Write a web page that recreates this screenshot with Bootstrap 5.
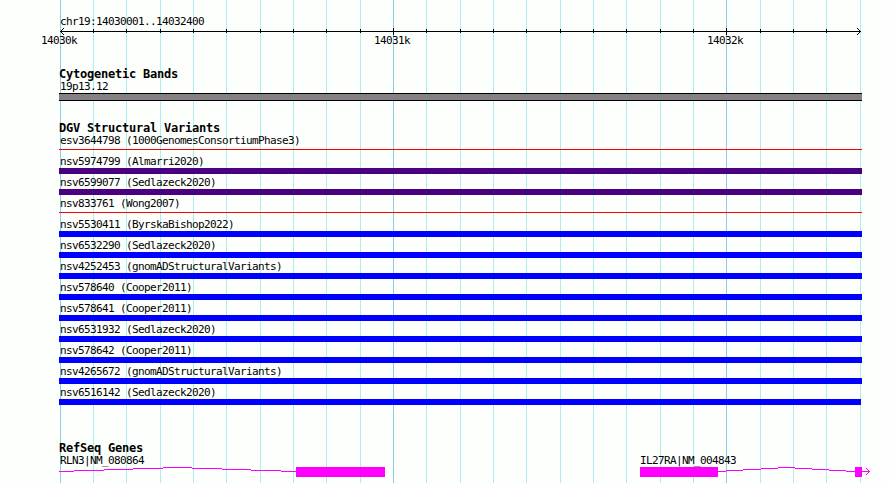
<!DOCTYPE html>
<html lang="en">
<head>
    <meta charset="UTF-8">
    <title>chr19:14030001..14032400</title>
    <link rel="stylesheet" href="https://cdn.jsdelivr.net/npm/bootstrap@5.3.2/dist/css/bootstrap.min.css">
    <style>
        body { background: #fdfffc; color: #000; }
        .browser { width: 890px; height: 483px; }
        .gridlines { z-index: -1; }
        .label {
            font: 11px/12px "DejaVu Sans Mono", monospace;
            letter-spacing: -0.622px;
            white-space: pre;
            height: 12px;
        }
        .track-title {
            font: bold 12px/12px "DejaVu Sans Mono", monospace;
            letter-spacing: -0.224px;
            white-space: pre;
            height: 12px;
        }
        .tracks { padding-left: 59px; }
        .ruler { padding-top: 15px; height: 68px; }
        .ruler svg, .genes svg { display: block; margin-left: -59px; }
        .scale span { flex: 0 0 333px; }
        .scale { margin-left: -18px; }
        .cyto { height: 54px; }
        .band { width: 803px; height: 8px; margin-top: 1px; background: #848084; border: solid #000; border-width: 1px 0; }
        .variants { height: 320px; }
        .variant { height: 21px; }
        .bar { width: 803px; height: 6px; margin-top: 1px; }
        .bar.thin { height: 1px; margin-top: 3px; background: #f00; }
        .bar.indigo { background: #4b0082; }
        .bar.blue { background: #00f; }
        .variant:last-child .bar { width: 802px; }
        .ink { padding-left: 1px; line-height: 14px; }
        .gene-first { width: 580px; }
    </style>
</head>
<body>

    <div class="browser position-relative overflow-hidden">
        <svg class="gridlines position-absolute top-0 start-0" width="890" height="483" shape-rendering="crispEdges"></svg>

        <div class="tracks d-flex flex-column">
            <div class="ruler">
                <div class="label ink">chr19:14030001..14032400</div>
                <svg class="axis" width="890" height="8" viewBox="0 27 890 8" shape-rendering="crispEdges"></svg>
                <div class="scale label d-flex"><span>14030k</span><span>14031k</span><span>14032k</span></div>
            </div>

            <div class="cyto">
                <div class="track-title">Cytogenetic Bands</div>
                <div class="label ink">19p13.12</div>
                <div class="band"></div>
            </div>

            <div class="variants">
                <div class="track-title">DGV Structural Variants</div>
                <div class="variant-list"></div>
            </div>

            <div class="genes">
                <div class="track-title">RefSeq Genes</div>
                <div class="label ink d-flex"><span class="gene-first">RLN3|NM_080864</span><span>IL27RA|NM_004843</span></div>
                <svg width="890" height="14" viewBox="0 466 890 14" shape-rendering="crispEdges" fill="#f0f">
                    <path fill="none" stroke="#f0f" d="M59 471.5H74M74 470.5H104M104 469.5H133M133 468.5H163M163 467.5H192M192 468.5H222M222 469.5H251M251 470.5H281M281 471.5H296"/>
                    <rect x="296" y="467" width="89" height="10"/>
                    <rect x="640" y="467" width="78" height="10"/>
                    <path fill="none" stroke="#f0f" d="M718 471.5H726M726 470.5H743M743 469.5H761M761 468.5H778M778 467.5H795M795 468.5H812M812 469.5H829M829 470.5H846M846 471.5H855"/>
                    <rect x="855" y="467" width="7" height="10"/>
                    <path d="M862 471h8v1h-8zM866 468h1v1h-1zM867 469h1v1h-1zM868 470h1v1h-1zM868 472h1v1h-1zM867 473h1v1h-1zM866 474h1v1h-1z"/>
                </svg>
            </div>
        </div>
    </div>

    <script src="https://cdn.jsdelivr.net/npm/bootstrap@5.3.2/dist/js/bootstrap.bundle.min.js"></script>
    <script>
        const variants = [
            ['esv3644798 (1000GenomesConsortiumPhase3)', 'thin'],
            ['nsv5974799 (Almarri2020)', 'indigo'],
            ['nsv6599077 (Sedlazeck2020)', 'indigo'],
            ['nsv833761 (Wong2007)', 'thin'],
            ['nsv5530411 (ByrskaBishop2022)', 'blue'],
            ['nsv6532290 (Sedlazeck2020)', 'blue'],
            ['nsv4252453 (gnomADStructuralVariants)', 'blue'],
            ['nsv578640 (Cooper2011)', 'blue'],
            ['nsv578641 (Cooper2011)', 'blue'],
            ['nsv6531932 (Sedlazeck2020)', 'blue'],
            ['nsv578642 (Cooper2011)', 'blue'],
            ['nsv4265672 (gnomADStructuralVariants)', 'blue'],
            ['nsv6516142 (Sedlazeck2020)', 'blue']
        ]

        document.querySelector('.variant-list').innerHTML = variants.map(([name, kind]) => `
            <div class="variant">
                <div class="label ink">${name}</div>
                <div class="bar ${kind}"></div>
            </div>
        `).join('')

        // one line every 100 bp, a darker one every 1000 bp
        let lines = ''
        let ticks = '<path d="M60 31h801v1h-801z"/>'
        for (let i = 0; i <= 24; i++) {
            const x = Math.floor(60 + i * 100 / 3)
            const major = i % 10 === 0
            lines += `<rect x="${x}" y="0" width="1" height="483" fill="${major ? '#87ceeb' : '#afeeee'}"/>`
            if (i > 0 && i < 24) {
                ticks += major
                    ? `<rect x="${x}" y="28" width="1" height="7"/>`
                    : `<rect x="${x}" y="29" width="1" height="4"/>`
            }
        }
        // arrow heads at both ends of the axis
        for (let d = 1; d <= 3; d++) {
            for (const y of [31 - d, 31 + d]) {
                ticks += `<rect x="${60 + d}" y="${y}" width="1" height="1"/><rect x="${860 - d}" y="${y}" width="1" height="1"/>`
            }
        }
        document.querySelector('.gridlines').innerHTML = lines
        document.querySelector('.axis').innerHTML = ticks
    </script>

</body>
</html>
